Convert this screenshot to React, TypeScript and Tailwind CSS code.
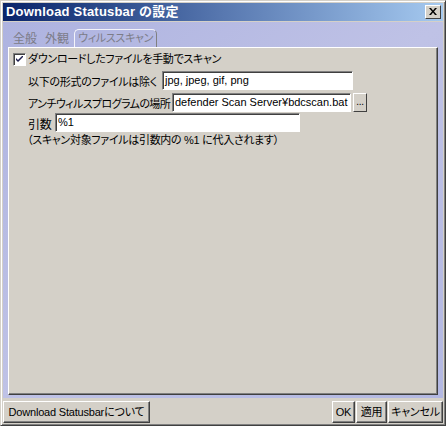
import { useState } from 'react'

const font = { fontFamily: '"Liberation Sans", "Noto Sans CJK JP", sans-serif' }

const Field = ({ value, className }: { value: string; className: string }) => (
  <div
    className={`h-[19px] bg-white border border-t-[#808080] border-l-[#808080] border-b-[#ffffff] border-r-[#ffffff] shadow-[inset_1px_1px_0_#404040] px-[2px] leading-[16px] text-[11px] text-black overflow-hidden whitespace-nowrap ${className}`}
  >
    {value}
  </div>
)

const Btn = ({ label, className }: { label: string; className: string }) => (
  <button
    className={`h-[22px] bg-[#d4d0c8] border border-t-white border-l-white border-r-[#404040] border-b-[#404040] shadow-[inset_-1px_-1px_0_#808080] text-[11px] tracking-[-0.2px] text-black leading-none px-0 whitespace-nowrap ${className}`}
  >
    {label}
  </button>
)

const App = () => {
  const [checked, setChecked] = useState(true)

  return (
    <div
      style={font}
      className="w-[446px] h-[426px] bg-[#d4d0c8] border border-t-[#d4d0c8] border-l-[#d4d0c8] border-r-[#404040] border-b-[#404040] shadow-[inset_1px_1px_0_#fff,inset_-1px_-1px_0_#808080] p-[2px] flex flex-col overflow-hidden [font-feature-settings:'palt']"
    >
      {/* title bar */}
      <div className="h-[18px] flex items-center justify-between pl-[3px] pr-[2px] bg-gradient-to-r from-[#0a246a] via-[#5878b0] to-[#a6caf0]">
        <span className="text-white font-bold text-[13px] leading-none tracking-[0.2px] [font-feature-settings:normal]">
          Download Statusbar の設定
        </span>
        <div className="w-[16px] h-[14px] bg-[#d4d0c8] border border-t-white border-l-white border-r-[#404040] border-b-[#404040] flex items-center justify-center">
          <svg width="8" height="7" viewBox="0 0 8 7">
            <path d="M0 0h2l2 2.5L6 0h2L5 3.5 8 7H6L4 4.5 2 7H0l3-3.5z" fill="#000" />
          </svg>
        </div>
      </div>

      {/* tab area */}
      <div className="mt-[1px] h-[377px] bg-gradient-to-br from-[#aeb3e0] via-[#bfc2e6] to-[#b3b8e2] px-[5px] pt-[8px] pb-[3px] flex flex-col">
        <div className="flex items-end h-[17px] text-[12px] text-[#7c7c88] leading-none">
          <span className="ml-[5px] pb-[2px]">全般</span>
          <span className="ml-[8px] pb-[2px]">外観</span>
          <span className="ml-[5px] h-[18px] px-[3px] pt-[3px] border border-b-0 border-[#f4f4fa] border-r-[#808080] rounded-t-[5px] whitespace-nowrap text-[11px] tracking-[-0.3px]">
            ウィルススキャン
          </span>
        </div>
        <div className="flex-1 bg-[#d4d0c8] border border-t-white border-l-white border-r-[#404040] border-b-[#404040] shadow-[inset_-1px_-1px_0_#808080] px-[4px] pt-[5px] text-[11px] tracking-[-0.3px] text-black leading-[14px]">
          <label className="flex items-center gap-[2px] h-[15px] -mt-[1px]">
            <span
              onClick={() => setChecked(!checked)}
              className="w-[13px] h-[13px] bg-white border border-t-[#808080] border-l-[#808080] border-r-white border-b-white shadow-[inset_1px_1px_0_#404040] flex items-center justify-center"
            >
              {checked && (
                <svg width="7" height="7" viewBox="0 0 7 7">
                  <path d="M0 2l2 2 5-5v2L2 6 0 4z" fill="#202050" />
                </svg>
              )}
            </span>
            <span className="whitespace-nowrap">ダウンロードしたファイルを手動でスキャン</span>
          </label>

          <div className="pl-[15px] mt-[3px]">
            <div className="flex items-end h-[20px]">
              <span className="w-[134px] pb-[1px] whitespace-nowrap">以下の形式のファイルは除く</span>
              <Field value="jpg, jpeg, gif, png" className="w-[191px] tracking-normal" />
            </div>
            <div className="flex items-end h-[21px] mt-[1px]">
              <span className="w-[144px] pb-[1px] whitespace-nowrap tracking-[-0.6px]">アンチウィルスプログラムの場所</span>
              <Field value="defender Scan Server¥bdcscan.bat" className="w-[179px] tracking-normal" />
              <button className="ml-[2px] w-[14px] h-[19px] bg-[#d4d0c8] border border-t-white border-l-white border-r-[#404040] border-b-[#404040] text-[10px] leading-none">
                ...
              </button>
            </div>
            <div className="flex items-start h-[20px] mt-[1px]">
              <span className="w-[27px] pt-[5px] text-[12px]">引数</span>
              <Field value="%1" className="w-[245px] tracking-normal" />
            </div>
            <div className="-ml-[1px] whitespace-nowrap">（スキャン対象ファイルは引数内の %1 に代入されます）</div>
          </div>
        </div>
      </div>

      {/* bottom buttons */}
      <div className="flex items-center justify-between mt-[3px]">
        <Btn label="Download Statusbarについて" className="w-[147px]" />
        <div className="flex gap-[1px]">
          <Btn label="OK" className="w-[23px]" />
          <Btn label="適用" className="w-[31px]" />
          <Btn label="キャンセル" className="w-[55px]" />
        </div>
      </div>
    </div>
  )
}

export default App
